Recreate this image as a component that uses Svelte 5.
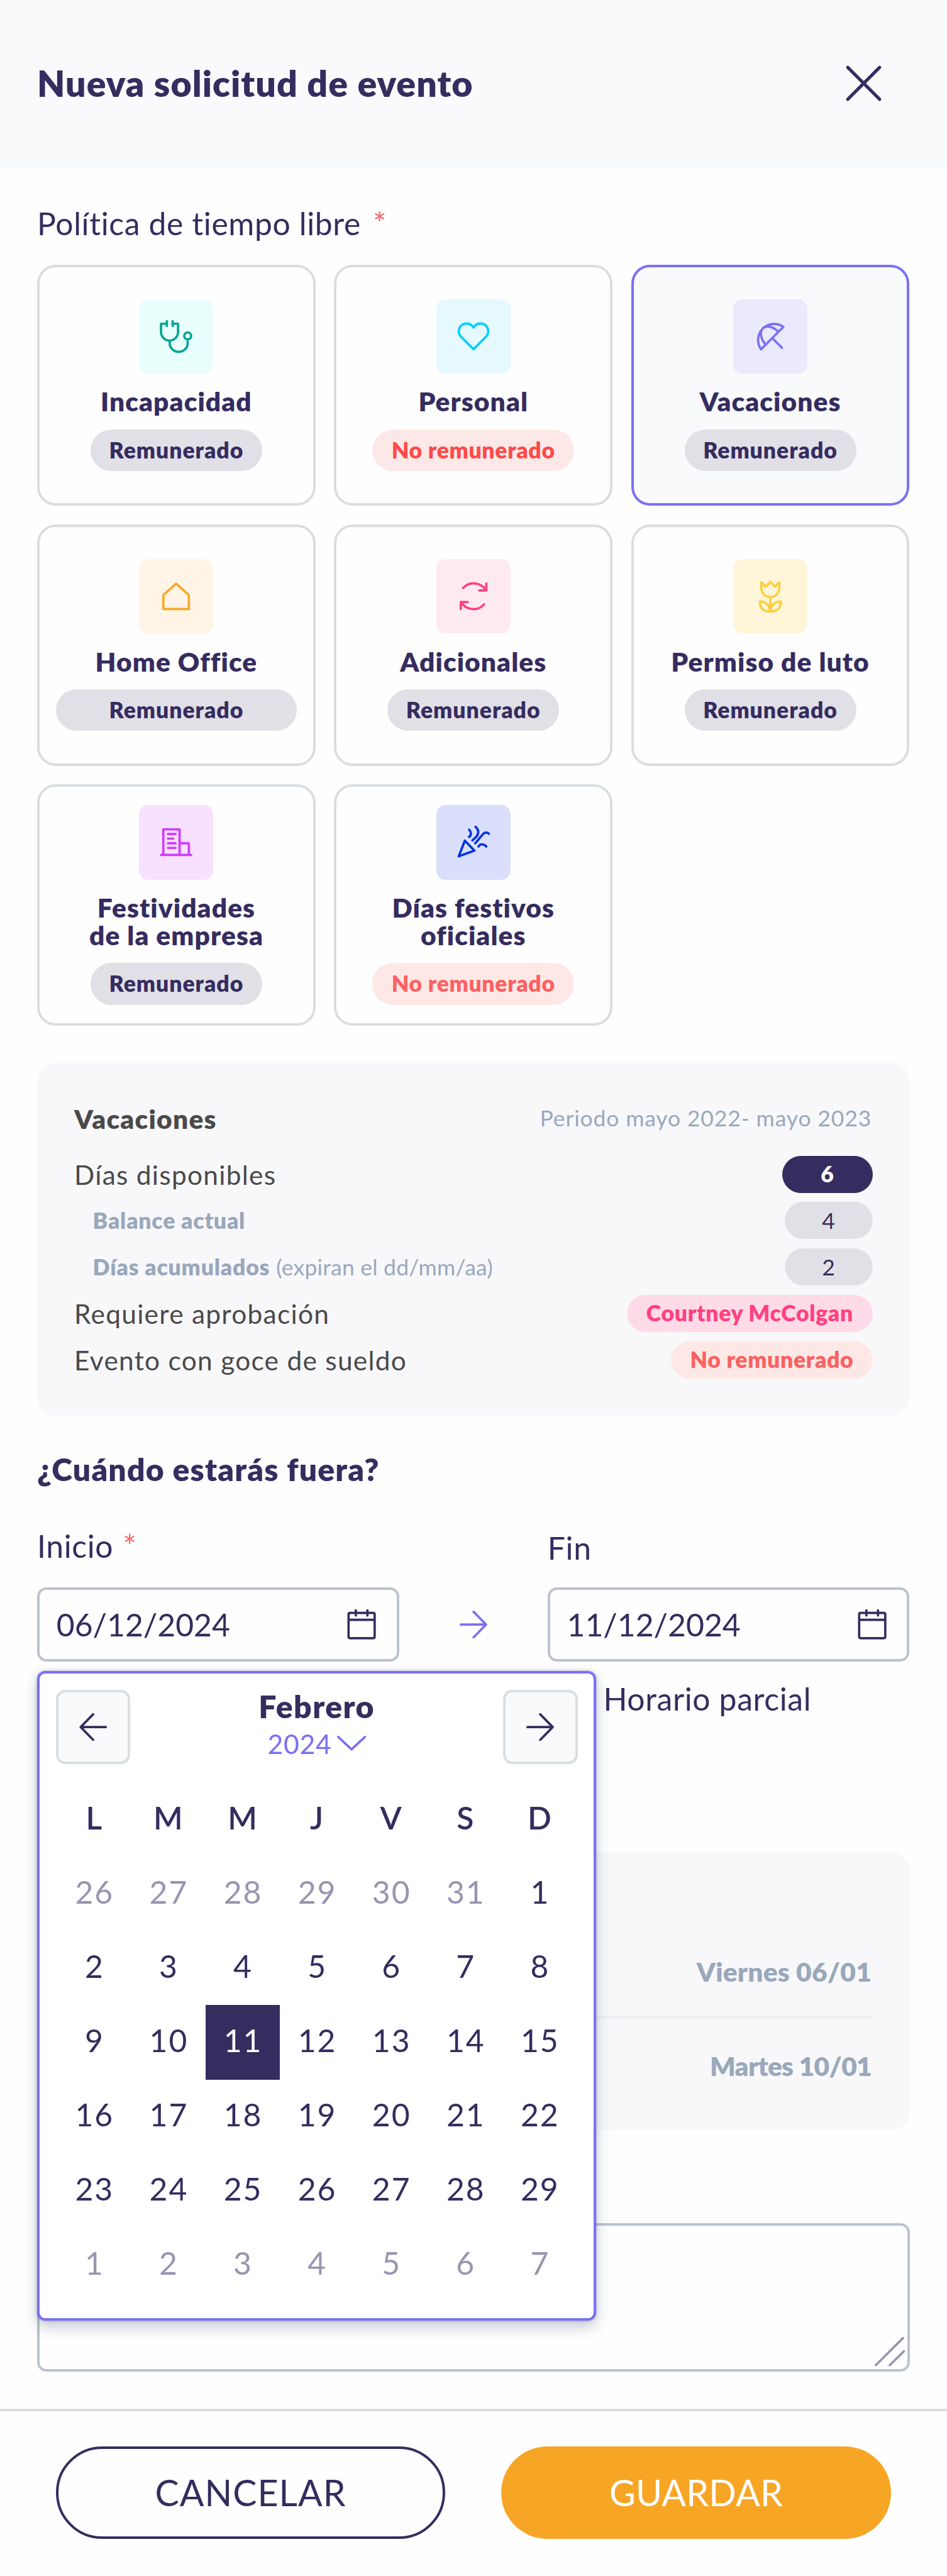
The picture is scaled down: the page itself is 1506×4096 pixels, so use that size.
<script>
  const policies = [
    { name: 'Incapacidad', icon: 'steth', tone: 'teal', paid: true },
    { name: 'Personal', icon: 'heart', tone: 'cyan', paid: false },
    { name: 'Vacaciones', icon: 'umbrella', tone: 'violet', paid: true, selected: true },
    { name: 'Home Office', icon: 'home', tone: 'orange', paid: true, wide: true },
    { name: 'Adicionales', icon: 'refresh', tone: 'pink', paid: true },
    { name: 'Permiso de luto', icon: 'tulip', tone: 'yellow', paid: true },
    { name: 'Festividades\nde la empresa', icon: 'building', tone: 'magenta', paid: true },
    { name: 'Días festivos\noficiales', icon: 'party', tone: 'blue', paid: false, soft: true }
  ];

  // Stroke paths on a 128 x 128 tile.
  const icons = {
    steth:
      'M48 37.5V46M58 37.5V46M48 42H38V56a14.7 15 0 0 0 29.4 0V42H58M53 71v4.500a15.500 15 0 0 0 31 0V70M90 63a6 6 0 1 1-12 0a6 6 0 1 1 12 0',
    heart:
      'M64 86L42.500 64.500A13.400 13.400 0 0 1 61.500 45.500L64 48.500L66.500 45.500A13.400 13.400 0 0 1 85.500 64.500Z',
    umbrella:
      'M48 86L86.500 47.500A27.600 27.600 0 0 0 48 86ZM51 50C58 43 70 48 78 56M51 50C44 58 49 70 56 78M67.500 67L84 83.500',
    home: 'M42 62L64 42.500L86 62V86H42Z',
    refresh:
      'M46 50C55 39 75 38 86 54M86 42V54H74M42 86V74H54M42 74C52 89 72 90 82 78',
    tulip:
      'M48.500 40L56.500 47.500L64 39L71.500 47.500L79.500 40V50a15.500 15.500 0 0 1-31 0ZM64 66V90M46 73C56 73 63 80 64 90C52 91 45 83 46 73ZM82 73C72 73 65 80 64 90C76 91 83 83 82 73Z',
    building:
      'M42 86V42H70V86M70 66H86V86M38 86H90M50 50H63M50 58H59M50 66H63M50 74H63',
    party:
      'M38.500 88.500L49 61.500L65.500 78.500ZM56.500 42.500c4 4 4 9 0 12.500M67.500 37.500c6 5 6 12 1 17.500L62 61M67 66L80 50.500c3-3.500 7-4 10.500-1M72.500 71.500c3-5 9-5 13.500 0'
  };

  const weekdays = ['L', 'M', 'M', 'J', 'V', 'S', 'D'];
  const days = [
    ...[26, 27, 28, 29, 30, 31].map((n) => ({ n, out: true })),
    ...Array.from({ length: 29 }, (_, i) => ({ n: i + 1, out: false })),
    ...[1, 2, 3, 4, 5, 6, 7].map((n) => ({ n, out: true }))
  ];
  const selectedDay = 11;
</script>

{#snippet calendarIcon()}
  <svg class="cal-icon" viewBox="0 0 50 52">
    <path d="M5 6H45Q47.500 6 47.500 8.500V47Q47.500 49.700 45 49.700H5Q2.500 49.700 2.500 47V8.500Q2.500 6 5 6ZM2.500 18H47.500M15 1.500V10.500M35 1.500V10.500" />
  </svg>
{/snippet}

<div class="page">
  <header>
    <h1>Nueva solicitud de evento</h1>
    <button class="close" aria-label="Cerrar">
      <svg viewBox="0 0 64 64"><path d="M4.500 4.500L59.500 59.500M59.500 4.500L4.500 59.500" /></svg>
    </button>
  </header>

  <main>
    <p class="label policy-label">Política de tiempo libre <b class="star">*</b></p>

    <div class="cards">
      {#each policies as p}
        <div class="card" class:selected={p.selected}>
          <div class="tile {p.tone}">
            <svg viewBox="0 0 128 128"><path d={icons[p.icon]} /></svg>
          </div>
          <h2>{p.name}</h2>
          <span class="pill tag" class:unpaid={!p.paid} class:soft={p.soft} class:wide={p.wide}>
            {p.paid ? 'Remunerado' : 'No remunerado'}
          </span>
        </div>
      {/each}
    </div>

    <section class="panel summary">
      <div class="row head">
        <strong>Vacaciones</strong>
        <span class="period">Periodo mayo 2022- mayo 2023</span>
      </div>
      <div class="row"><span>Días disponibles</span><span class="pill total">6</span></div>
      <div class="row sub"><b>Balance actual</b><span class="pill count">4</span></div>
      <div class="row sub">
        <span><b>Días acumulados</b> <span class="note">(expiran el dd/mm/aa)</span></span>
        <span class="pill count">2</span>
      </div>
      <div class="row"><span>Requiere aprobación</span><span class="pill person">Courtney McColgan</span></div>
      <div class="row"><span>Evento con goce de sueldo</span><span class="pill unpaid soft">No remunerado</span></div>
    </section>

    <h3>¿Cuándo estarás fuera?</h3>

    <div class="dates">
      <div class="field">
        <p class="label">Inicio <b class="star near">*</b></p>
        <div class="input"><span>06/12/2024</span>{@render calendarIcon()}</div>

        <div class="calendar">
          <div class="cal-head">
            <button class="nav" aria-label="Mes anterior">
              <svg viewBox="0 0 48 48"><path d="M46 24H2.500M24 2L2.500 24L24 46" /></svg>
            </button>
            <div class="month">
              <strong>Febrero</strong>
              <span class="year">2024<svg viewBox="0 0 50 26"><path d="M2 2L25 23.500L48 2" /></svg></span>
            </div>
            <button class="nav" aria-label="Mes siguiente">
              <svg viewBox="0 0 48 48"><path d="M2 24H45.500M24 2L45.500 24L24 46" /></svg>
            </button>
          </div>
          <div class="days">
            {#each weekdays as d}<span class="weekday">{d}</span>{/each}
            {#each days as d}
              <span class:out={d.out} class:chosen={!d.out && d.n === selectedDay}>{d.n}</span>
            {/each}
          </div>
        </div>
      </div>
      <div class="to">
        <svg viewBox="0 0 48 48"><path d="M2 24H45.500M24 2L45.500 24L24 46" /></svg>
      </div>
      <div class="field">
        <p class="label fin">Fin</p>
        <div class="input"><span>11/12/2024</span>{@render calendarIcon()}</div>
        <p class="label partial">Horario parcial</p>
      </div>
    </div>

    <section class="panel dates-summary">
      <div class="line"><span>Viernes 06/01</span></div>
      <div class="line last"><span>Martes 10/01</span></div>
    </section>

    <div class="textarea">
      <svg viewBox="0 0 52 50"><path d="M2 48.500L49 1.500M26 48.500L50.500 24.500" /></svg>
    </div>
  </main>

  <footer>
    <button class="cancel">CANCELAR</button>
    <button class="save">GUARDAR</button>
  </footer>
</div>

<style>
  :global(html) {
    font-size: 92.2523px;
  }
  :global(body) {
    margin: 0;
    background: #fefefe;
    overflow: hidden;
  }
  .page {
    --ink: #352c5f;
    --violet: #7b70f3;
    --line: #dadee1;
    --field: #bcc3ce;
    --slate: #9aa8bb;
    font-family: Lato, 'Open Sans', sans-serif;
    font-variant-ligatures: none;
    color: var(--ink);
    width: 100%;
    height: 44.4rem;
    display: flex;
    flex-direction: column;
  }
  .page * {
    box-sizing: border-box;
  }
  h1, h2, h3, p { margin: 0; }
  h1, h2, h3, strong, b, .pill, .line { font-weight: 800; }
  button {
    font: inherit;
    letter-spacing: inherit;
    color: inherit;
    padding: 0;
    border: 0;
    background: none;
  }
  svg {
    display: block;
    fill: none;
    stroke: currentColor;
    stroke-width: 4;
    stroke-linecap: round;
    stroke-linejoin: round;
  }

  header {
    height: 2.88rem;
    flex: none;
    background: #f9fafc;
    display: flex;
    align-items: center;
    justify-content: space-between;
    padding: 0 1.12rem 0 0.64rem;
  }
  h1 {
    font-size: 0.62rem;
    line-height: 0.8rem;
    letter-spacing: 0.019em;
  }
  .close svg {
    width: 0.64rem;
    height: 0.64rem;
    stroke-width: 5.5;
  }

  main {
    flex: 1;
    padding: 0.65rem 0.64rem 0;
  }
  .label {
    font-size: 0.54rem;
    line-height: 0.64rem;
    letter-spacing: 0.013em;
  }
  .star {
    color: #f96666;
    font-weight: 400;
    margin-left: 0.06rem;
  }
  .star.near { margin-left: 0.02rem; }
  .policy-label {
    margin-bottom: 0.39rem;
  }

  .cards {
    display: grid;
    grid-template-columns: repeat(3, 4.8rem);
    grid-auto-rows: 4.16rem;
    gap: 0.32rem;
  }
  .card {
    border: 4px solid var(--line);
    border-radius: 0.32rem;
    display: flex;
    flex-direction: column;
    align-items: center;
    justify-content: center;
    gap: 0.24rem;
  }
  .card.selected {
    border-color: var(--violet);
    background: #f9fafc;
  }
  .card h2 {
    font-size: 0.46rem;
    line-height: 0.48rem;
    letter-spacing: 0.026em;
    text-align: center;
    white-space: pre-line;
  }
  .tile {
    width: 1.28rem;
    height: 1.28rem;
    border-radius: 0.16rem;
  }
  .teal { background: #e8fffd; color: #00a694; }
  .cyan { background: #e5f9ff; color: #00cfff; }
  .violet { background: #ebe9fc; color: #7b70f3; }
  .orange { background: #fff4e6; color: #f9a826; }
  .pink { background: #ffeaf2; color: #ff4081; }
  .yellow { background: #fff5d9; color: #fdd03f; }
  .magenta { background: #f8e1ff; color: #cf3cff; }
  .blue { background: #d9defb; color: #0031e0; }

  .pill {
    height: 0.64rem;
    border-radius: 0.36rem;
    background: #e1e0e6;
    display: flex;
    align-items: center;
    justify-content: center;
    font-size: 0.385rem;
    line-height: 0.48rem;
    letter-spacing: 0.02em;
    white-space: nowrap;
  }
  .tag {
    height: 0.72rem;
    width: 2.96rem;
    letter-spacing: 0.028em;
  }
  .wide { width: 4.16rem; }
  .unpaid {
    width: 3.48rem;
    letter-spacing: 0.02em;
    background: #fce9e7;
    color: #ff4848;
  }
  .soft {
    background: #fee8e6;
    color: #fc6060;
  }

  .panel {
    background: #f8f8fb;
    border-radius: 0.32rem;
  }
  .summary {
    margin-top: 0.64rem;
    height: 6.08rem;
    padding: 0.64rem;
    display: flex;
    flex-direction: column;
    gap: 0.16rem;
    color: #4a4a4a;
    font-size: 0.46rem;
    letter-spacing: 0.03em;
  }
  .row {
    height: 0.64rem;
    display: flex;
    align-items: center;
    justify-content: space-between;
    white-space: nowrap;
  }
  .head { margin-bottom: 0.16rem; }
  .period {
    font-size: 0.385rem;
    letter-spacing: 0.024em;
    color: var(--slate);
    padding: 0 0.02rem 0.03rem 0;
  }
  .sub {
    padding-left: 0.32rem;
    font-size: 0.385rem;
    letter-spacing: 0.023em;
    color: var(--slate);
  }
  .note { letter-spacing: 0.006em; }
  .total {
    width: 1.56rem;
    background: var(--ink);
    color: #fff;
  }
  .count {
    width: 1.52rem;
    color: var(--ink);
    font-weight: 400;
  }
  .person {
    width: 4.24rem;
    background: #ffdbe7;
    color: #ff4081;
  }

  h3 {
    margin-top: 0.61rem;
    font-size: 0.54rem;
    line-height: 0.64rem;
    letter-spacing: 0.024em;
  }
  .dates {
    margin-top: 0.68rem;
    display: grid;
    grid-template-columns: 6.24rem 2.56rem 6.24rem;
  }
  .field { position: relative; }
  .input {
    margin-top: 0.39rem;
    height: 1.28rem;
    border: 4px solid var(--field);
    border-radius: 0.16rem;
    padding: 0 0.35rem 0 0.29rem;
    display: flex;
    align-items: center;
    justify-content: space-between;
    font-size: 0.54rem;
  }
  .fin { padding-top: 0.03rem; }
  .fin + .input { margin-top: 0.36rem; }
  .cal-icon {
    width: 0.5rem;
    height: 0.52rem;
  }
  .to {
    padding-top: 1.43rem;
    display: flex;
    justify-content: center;
    color: var(--violet);
  }
  .to svg, .nav svg {
    width: 0.48rem;
    height: 0.48rem;
  }
  .partial {
    margin: 0.33rem 0 0 0.96rem;
  }

  .calendar {
    position: absolute;
    z-index: 1;
    top: 2.47rem;
    left: 0;
    width: 9.64rem;
    height: 11.2rem;
    background: #fff;
    border: 4px solid var(--violet);
    border-radius: 0.14rem;
    padding: 0.28rem;
    box-shadow: 0 0.1rem 0.24rem rgba(52, 68, 105, 0.28), 0 0 0.05rem rgba(52, 68, 105, 0.4);
  }
  .cal-head {
    display: flex;
    justify-content: space-between;
    height: 1.28rem;
    margin-bottom: 0.32rem;
  }
  .nav {
    width: 1.28rem;
    height: 1.28rem;
    border: 4px solid var(--line);
    border-radius: 0.16rem;
    background: #f9fafc;
    display: grid;
    place-items: center;
  }
  .month {
    text-align: center;
    font-size: 0.54rem;
    line-height: 0.64rem;
  }
  .month strong {
    display: block;
    margin-top: -0.03rem;
    letter-spacing: 0.03em;
  }
  .year {
    display: flex;
    align-items: center;
    justify-content: center;
    gap: 0.09rem;
    color: var(--violet);
    font-size: 0.46rem;
    letter-spacing: 0.02em;
  }
  .year svg {
    width: 0.5rem;
    height: 0.26rem;
  }
  .days {
    display: grid;
    grid-template-columns: repeat(7, 1.28rem);
    grid-auto-rows: 1.28rem;
    justify-content: center;
  }
  .days span {
    display: grid;
    place-items: center;
    padding: 0 0 0.08rem 0.02rem;
    font-size: 0.54rem;
    letter-spacing: 0.04em;
  }
  .days .weekday { font-weight: 600; }
  .days .out { color: #9a94b0; }
  .days .chosen {
    background: var(--ink);
    color: #fff;
  }

  .dates-summary {
    margin-top: 2.31rem;
    height: 4.8rem;
    padding: 1.28rem 0.64rem 0;
    color: var(--slate);
    font-size: 0.46rem;
  }
  .line {
    height: 1.6rem;
    display: flex;
    align-items: center;
    justify-content: flex-end;
    padding-right: 0.02rem;
    letter-spacing: 0.006em;
  }
  .line:first-child { border-bottom: 4px solid #efeff3; }
  .line.last { letter-spacing: -0.015em; }
  .textarea {
    margin-top: 1.6rem;
    height: 2.56rem;
    border: 4px solid var(--field);
    border-radius: 0.16rem;
    display: flex;
    align-items: flex-end;
    justify-content: flex-end;
    padding: 0 0.04rem 0.05rem 0;
    color: #9a94b0;
  }
  .textarea svg {
    width: 0.52rem;
    height: 0.5rem;
  }

  footer {
    flex: none;
    height: 2.88rem;
    border-top: 4px solid var(--line);
    padding: 0.6rem 0.96rem 0;
    display: flex;
    gap: 0.96rem;
    font-size: 0.62rem;
  }
  footer button {
    width: 6.72rem;
    height: 1.6rem;
    border-radius: 0.8rem;
    padding-bottom: 0.02rem;
  }
  .cancel {
    border: 4px solid var(--ink);
    letter-spacing: 0.018em;
  }
  .save {
    background: #f7a525;
    color: #fff;
    letter-spacing: 0.004em;
  }
</style>
